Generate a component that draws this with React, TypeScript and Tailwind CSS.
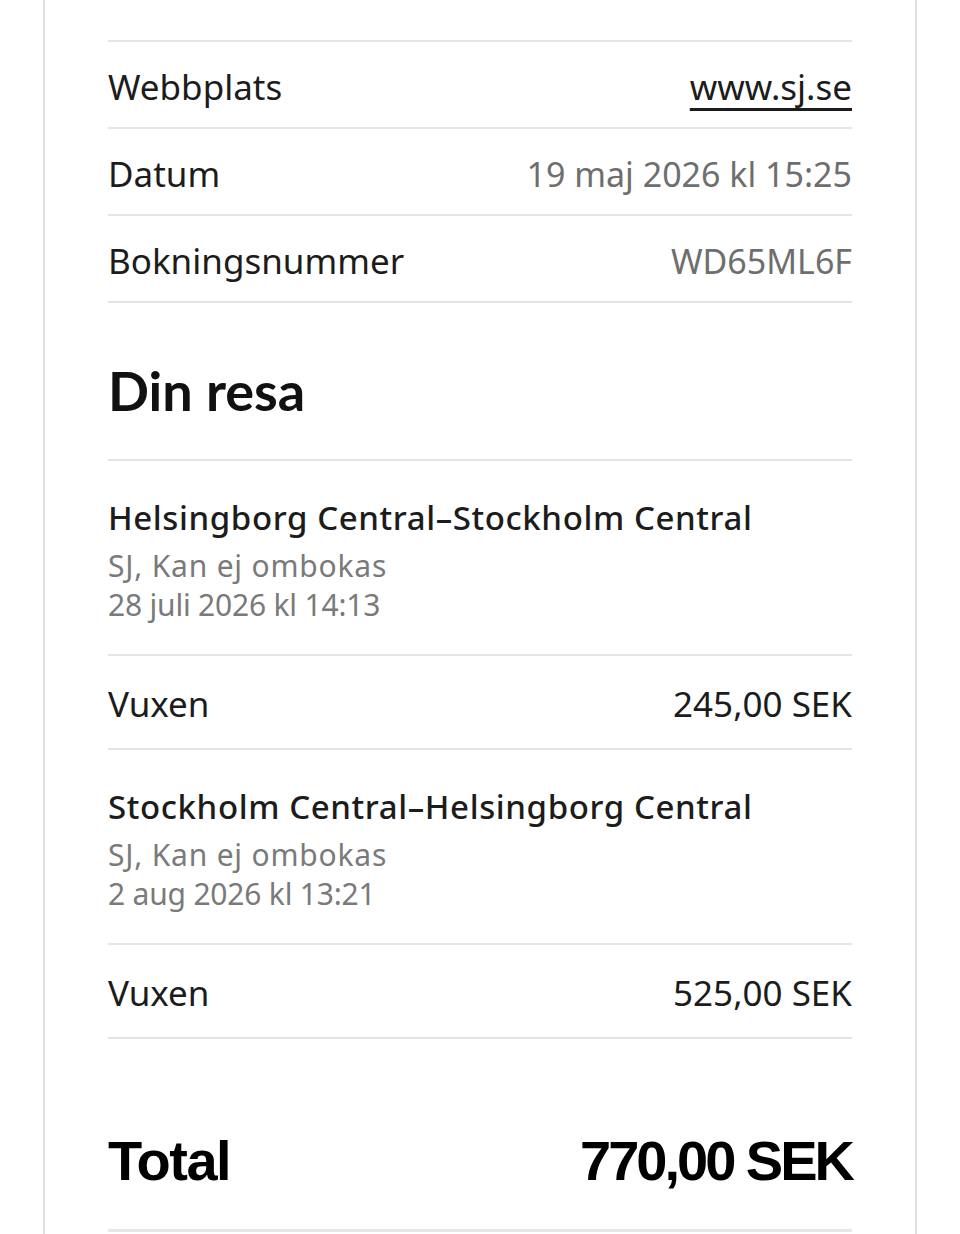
const body = { fontFamily: "'Noto Sans', Lato, sans-serif" };

function InfoRow({ label, value, link }: { label: string; value: string; link?: boolean }) {
  return (
    <div className="flex h-[87px] items-center justify-between border-b-2 border-[#e4e4e4] pt-[6px]">
      <span className="text-[35px] text-[#1c1c1c]">{label}</span>
      {link ? (
        <a
          href="#"
          className="text-[35px] text-[#1c1c1c] underline decoration-[3px] underline-offset-[8px]"
        >
          {value}
        </a>
      ) : (
        <span className="text-[34px] text-[#6e6e6e]">{value}</span>
      )}
    </div>
  );
}

function Leg({ route, meta, date }: { route: string; meta: string; date: string }) {
  return (
    <div className="flex h-[195px] flex-col justify-center border-b-2 border-[#e4e4e4] pt-[6px]">
      <p className="text-[33px] font-medium leading-[40px] tracking-[0.6px] text-[#1c1c1c]">{route}</p>
      <p className="mt-[8px] text-[30px] leading-[39px] tracking-[0.8px] text-[#7a7a7a]">{meta}</p>
      <p className="text-[30px] leading-[39px] tracking-[-0.2px] text-[#7a7a7a]">{date}</p>
    </div>
  );
}

function PriceRow({ label, price }: { label: string; price: string }) {
  return (
    <div className="flex h-[94px] items-center justify-between border-b-2 border-[#e4e4e4] pt-[4px]">
      <span className="text-[35px] text-[#1c1c1c]">{label}</span>
      <span className="text-[35px] text-[#1c1c1c]">{price}</span>
    </div>
  );
}

export default function App() {
  return (
    <div className="min-h-[1234px] bg-white" style={body}>
      <div className="mx-[43px] min-h-[1234px] border-x-2 border-[#dedede] px-[63px] pt-[40px]">
        <div className="border-t-2 border-[#e4e4e4]">
          <InfoRow label="Webbplats" value="www.sj.se" link />
          <InfoRow label="Datum" value="19 maj 2026 kl 15:25" />
          <InfoRow label="Bokningsnummer" value="WD65ML6F" />
        </div>

        <div className="flex h-[158px] items-center border-b-2 border-[#e4e4e4] pt-[18px]">
          <h2
            className="text-[54px] font-bold text-[#111]"
            style={{ fontFamily: "Lato, 'Noto Sans', sans-serif" }}
          >
            Din resa
          </h2>
        </div>

        <Leg
          route="Helsingborg Central–Stockholm Central"
          meta="SJ, Kan ej ombokas"
          date="28 juli 2026 kl 14:13"
        />
        <PriceRow label="Vuxen" price="245,00 SEK" />
        <Leg
          route="Stockholm Central–Helsingborg Central"
          meta="SJ, Kan ej ombokas"
          date="2 aug 2026 kl 13:21"
        />
        <PriceRow label="Vuxen" price="525,00 SEK" />

        <div
          className="flex h-[193px] items-center justify-between border-b-[3px] border-[#e6e6e6] pt-[54px]"
          style={{ fontFamily: "'Liberation Sans', Arial, sans-serif" }}
        >
          <span className="text-[56px] font-bold tracking-[-1.5px] text-black">Total</span>
          <span className="text-[56px] font-bold tracking-[-3px] text-black">770,00 SEK</span>
        </div>
      </div>
    </div>
  );
}
